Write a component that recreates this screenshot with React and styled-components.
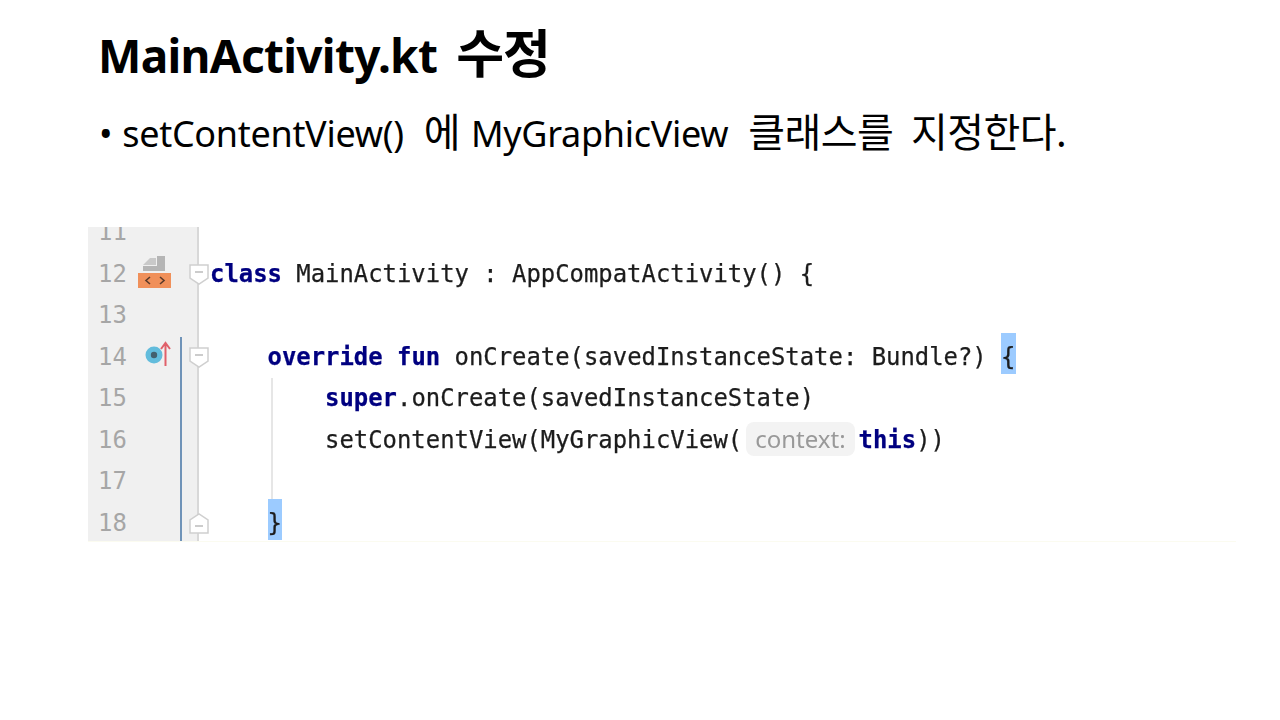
import styled, { createGlobalStyle } from 'styled-components';

const Global = createGlobalStyle`
  html, body { margin: 0; padding: 0; background: #fff; }
`;

const Slide = styled.div`
  width: 1280px;
  height: 720px;
  overflow: hidden;
  display: flex;
  flex-direction: column;
  font-family: "Noto Sans", "Noto Sans CJK KR", sans-serif;
  color: #000;
`;

const Title = styled.h1`
  margin: 19px 0 0 98px;
  display: flex;
  align-items: baseline;
  gap: 19px;
  font-size: 46px;
  line-height: 68px;
  font-weight: 700;
  letter-spacing: -0.7px;
`;

const TitleKo = styled.span`
  font-size: 52px;
  letter-spacing: -1px;
`;

const Bullet = styled.div`
  margin: 19px 0 0 99px;
  display: flex;
  align-items: baseline;
  gap: 20px;
  font-size: 36px;
  line-height: 48px;
  white-space: pre;
  letter-spacing: -0.3px;
`;

const Dot = styled.span`
  margin-right: -10px;
`;

const Ko = styled.span`
  font-size: 40px;
  letter-spacing: -0.6px;
  margin-right: ${p => p.$pull || 0}px;
`;

const Panel = styled.div`
  margin: 69px 0 0 88px;
  width: 1148px;
  height: 314px;
  overflow: hidden;
  border-bottom: 1px solid #fbfbf0;
  filter: blur(0.45px);
`;

const Lines = styled.div`
  margin-top: -15px;
  display: flex;
  flex-direction: column;
`;

const Row = styled.div`
  height: 41.5px;
  display: grid;
  grid-template-columns: 50px 44px 17px 1fr;
  font-family: "DejaVu Sans Mono", monospace;
  font-size: 23.9px;
  line-height: 41.5px;
`;

const LineNo = styled.div`
  background: #f0f0f0;
  color: #a6a6a6;
  padding-left: 10px;
`;

const Marker = styled.div`
  background: #f0f0f0;
  box-sizing: border-box;
  display: flex;
  align-items: center;
  border-right: 2px solid ${p => (p.$changed ? '#6f93b8' : '#f0f0f0')};
`;

const Fold = styled.div`
  position: relative;
  background: #f0f0f0;
  box-sizing: border-box;
  border-right: 2px solid #d8d8d8;
`;

const FoldMark = styled.svg`
  position: absolute;
  left: 7px;
  top: ${p => p.$top}px;
  width: 20px;
  height: 21px;
`;

const Code = styled.div`
  position: relative;
  padding-left: 11px;
  white-space: pre;
  color: #1c1c1c;
  -webkit-text-stroke: 0.25px currentColor;
`;

const Guide = styled.span`
  position: absolute;
  left: 72px;
  top: 0;
  bottom: 0;
  width: 2px;
  background: #e6e6e6;
`;

const Keyword = styled.span`
  color: #000080;
  font-weight: 700;
`;

const Brace = styled.span`
  display: inline-block;
  line-height: 33.5px;
  padding-top: 8px;
  margin-top: -8px;
  background: #9ccbff;
`;

const Hint = styled.span`
  display: inline-block;
  height: 34px;
  line-height: 34px;
  margin: 0 4px;
  padding: 0 9px;
  border-radius: 8px;
  background: #f3f3f3;
  color: #999;
  font-family: "Noto Sans", sans-serif;
  font-size: 24px;
  -webkit-text-stroke: 0;
`;

const ClassIconSvg = styled.svg`
  width: 34px;
  height: 34px;
  margin-top: -2px;
`;

const OverrideIconSvg = styled.svg`
  width: 30px;
  height: 30px;
  margin: -5px 0 0 5px;
`;

const ClassIcon = () => (
  <ClassIconSvg viewBox="0 0 34 34">
    <path d="M5 9 L12 2 L18 2 L18 9 Z" fill="#c9c9c9" />
    <path d="M5 10 H27 V15 H5 Z" fill="#b5b5b5" />
    <path d="M19 0 H27 V10 H19 Z" fill="#b5b5b5" />
    <rect x="0" y="17" width="33" height="15" fill="#f0905a" />
    <path d="M12 21 L8 24.5 L12 28 M22 21 L26 24.5 L22 28" fill="none" stroke="#5a3a2a" strokeWidth="1.6" />
  </ClassIconSvg>
);

const OverrideIcon = () => (
  <OverrideIconSvg viewBox="0 0 30 30">
    <circle cx="11" cy="15" r="8.5" fill="#62bcdc" />
    <circle cx="11" cy="15" r="3.2" fill="#43606e" />
    <path d="M22.5 26 L22.5 3 M18 9 L22.5 3 L27 9" fill="none" stroke="#e0606a" strokeWidth="2" />
  </OverrideIconSvg>
);

const FoldOpen = () => (
  <FoldMark $top={10} viewBox="0 0 20 21">
    <path d="M1 1 H19 V14 L10 20 L1 14 Z" fill="#fff" stroke="#cfcfcf" strokeWidth="1.5" />
    <path d="M6 8 H14" stroke="#bbb" strokeWidth="1.5" />
  </FoldMark>
);

const FoldClose = () => (
  <FoldMark $top={10} viewBox="0 0 20 21">
    <path d="M1 20 H19 V7 L10 1 L1 7 Z" fill="#fff" stroke="#cfcfcf" strokeWidth="1.5" />
    <path d="M6 13 H14" stroke="#bbb" strokeWidth="1.5" />
  </FoldMark>
);

const rows = [
  { no: 11 },
  {
    no: 12,
    icon: <ClassIcon />,
    fold: <FoldOpen />,
    code: <><Keyword>class</Keyword> MainActivity : AppCompatActivity() {'{'}</>,
  },
  { no: 13 },
  {
    no: 14,
    changed: true,
    icon: <OverrideIcon />,
    fold: <FoldOpen />,
    code: <>    <Keyword>override fun</Keyword> onCreate(savedInstanceState: Bundle?) <Brace>{'{'}</Brace></>,
  },
  {
    no: 15,
    changed: true,
    guide: true,
    code: <>        <Keyword>super</Keyword>.onCreate(savedInstanceState)</>,
  },
  {
    no: 16,
    changed: true,
    guide: true,
    code: <>        setContentView(MyGraphicView(<Hint>context:</Hint><Keyword>this</Keyword>))</>,
  },
  { no: 17, changed: true, guide: true },
  {
    no: 18,
    changed: true,
    fold: <FoldClose />,
    code: <>    <Brace>{'}'}</Brace></>,
  },
];

const App = () => (
  <Slide>
    <Global />
    <Title>
      <span>MainActivity.kt</span>
      <TitleKo>수정</TitleKo>
    </Title>
    <Bullet>
      <Dot>•</Dot>
      <span>setContentView()</span>
      <Ko $pull={-9}>에</Ko>
      <span>MyGraphicView</span>
      <Ko $pull={-2}>클래스를</Ko>
      <Ko>지정한다.</Ko>
    </Bullet>
    <Panel>
      <Lines>
        {rows.map(r => (
          <Row key={r.no}>
            <LineNo>{r.no}</LineNo>
            <Marker $changed={r.changed}>{r.icon}</Marker>
            <Fold>{r.fold}</Fold>
            <Code>
              {r.guide && <Guide />}
              {r.code}
            </Code>
          </Row>
        ))}
      </Lines>
    </Panel>
  </Slide>
);

export default App;
